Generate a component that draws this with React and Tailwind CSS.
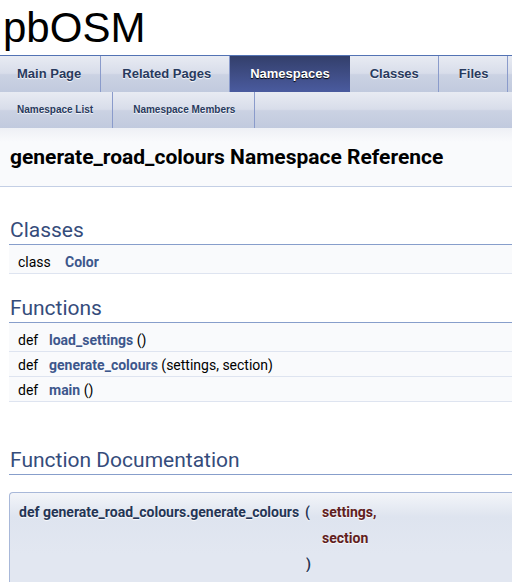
export default function App() {
  const tabBg =
    "bg-[linear-gradient(to_bottom,#E8EBF3_0%,#D8DDEA_48%,#CBD2E3_52%,#C1CADE_100%)]";
  const mainTabs = [
    { label: "Main Page", pad: "pl-[17px] pr-[19px]" },
    { label: "Related Pages", pad: "pl-[21px] pr-[18px]" },
    { label: "Namespaces", active: true },
    { label: "Classes", pad: "pl-[20px] pr-[19px]" },
    { label: "Files", pad: "pl-[20px] pr-[19px]" },
  ];
  const subTabs = [
    { label: "Namespace List", pad: "pl-[17px] pr-[19px]" },
    { label: "Namespace Members", pad: "pl-[20px] pr-[19px]" },
  ];
  const shadowLight = "[text-shadow:0_1px_1px_rgba(255,255,255,0.9)]";

  return (
    <div className="w-[512px] h-[582px] overflow-hidden bg-white font-['Roboto',sans-serif] text-[14px] text-black">
      {/* Title area */}
      <div className="h-[55px] pl-[3px] pt-[4px] font-['Liberation_Sans',Arial,sans-serif] text-[42px] leading-[47px] text-black whitespace-nowrap">
        pbOSM
      </div>

      {/* Main tabs */}
      <div className={`w-[700px] border-t border-[#5373B4] flex h-[37px] ${tabBg}`}>
        {mainTabs.map((t) =>
          t.active ? (
            <div
              key={t.label}
              className="h-[36px] leading-[36px] pl-[20px] pr-[20px] bg-[linear-gradient(to_bottom,#333F6B_0%,#3F4D85_50%,#4A5B9F_100%)] text-white font-['Liberation_Sans',Arial,sans-serif] text-[13px] font-bold whitespace-nowrap [text-shadow:0_1px_1px_rgba(0,0,0,1)]"
            >
              {t.label}
            </div>
          ) : (
            <div
              key={t.label}
              className={`h-[36px] leading-[36px] ${t.pad} border-r border-[#8A9BCB] text-[#283A5D] font-['Liberation_Sans',Arial,sans-serif] text-[13px] font-bold whitespace-nowrap ${shadowLight}`}
            >
              {t.label}
            </div>
          )
        )}
      </div>

      {/* Sub tabs */}
      <div className={`w-[700px] flex h-[36px] ${tabBg}`}>
        {subTabs.map((t) => (
          <div
            key={t.label}
            className={`h-[36px] leading-[36px] ${t.pad} border-r border-[#8A9BCB] text-[#283A5D] font-['Liberation_Sans',Arial,sans-serif] text-[10px] font-bold whitespace-nowrap ${shadowLight}`}
          >
            {t.label}
          </div>
        ))}
      </div>

      {/* Header */}
      <div className="h-[59px] border-b border-[#C4CFE5] bg-[linear-gradient(to_bottom,#EEF0F5_0px,#F9FAFC_14px,#F9FAFC_100%)] pl-[10px] pt-[15px]">
        <div className="text-[21px] leading-[28px] font-bold text-black whitespace-nowrap">
          generate_road_colours Namespace Reference
        </div>
      </div>

      {/* Contents */}
      <div className="pl-[9px] w-[640px]">
        {/* Classes */}
        <h2 className="mt-[31px] pl-[1px] text-[21px] leading-[24px] pb-[2px] font-normal text-[#354C7B] border-b border-[#879ECB]">
          Classes
        </h2>
        <div className="flex bg-[#F9FAFC] border-b border-[#DEE4F0] pt-[6px] leading-[22px]">
          <span className="pl-[9px] w-[56px]">class</span>
          <span className="font-bold text-[#3D578C]">Color</span>
        </div>

        {/* Functions */}
        <h2 className="mt-[22px] pl-[1px] text-[21px] leading-[24px] pb-[2px] font-normal text-[#354C7B] border-b border-[#879ECB]">
          Functions
        </h2>
        {[
          { name: "load_settings", args: "()" },
          { name: "generate_colours", args: "(settings, section)" },
          { name: "main", args: "()" },
        ].map((f, i) => (
          <div
            key={f.name}
            className={`flex bg-[#F9FAFC] border-b border-[#DEE4F0] ${i === 0 ? "pt-[6px]" : "pt-[2px]"} leading-[22px] whitespace-nowrap`}
          >
            <span className="pl-[9px] w-[40px]">def</span>
            <span>
              <span className="font-bold text-[#3D578C]">{f.name}</span>{" "}
              {f.args}
            </span>
          </div>
        ))}

        {/* Function Documentation */}
        <h2 className="mt-[46px] pl-[1px] text-[21px] leading-[24px] pb-[2px] font-normal text-[#354C7B] border-b border-[#879ECB]">
          Function Documentation
        </h2>
        <div className="mt-[17px] h-[120px] border-t border-l border-[#A8B8D9] rounded-tl-[4px] bg-[linear-gradient(to_bottom,#F3F5F9_0px,#DEE4EF_24px,#E2E7F1_60px,#E2E7F1_100%)] pl-[9px] pt-[8px] font-bold text-[#253555] [text-shadow:0_1px_1px_rgba(255,255,255,0.9)]">
          <div className="grid grid-cols-[auto_auto_auto] justify-start gap-y-[4px] leading-[22px] whitespace-nowrap">
            <span>def generate_road_colours.generate_colours</span>
            <span className="pl-[6px]">(</span>
            <span className="pl-[11px] text-[#602020]">settings,</span>
            <span></span>
            <span></span>
            <span className="pl-[11px] text-[#602020]">section</span>
            <span></span>
            <span className="pl-[7px]">)</span>
            <span></span>
          </div>
        </div>
      </div>
    </div>
  );
}
